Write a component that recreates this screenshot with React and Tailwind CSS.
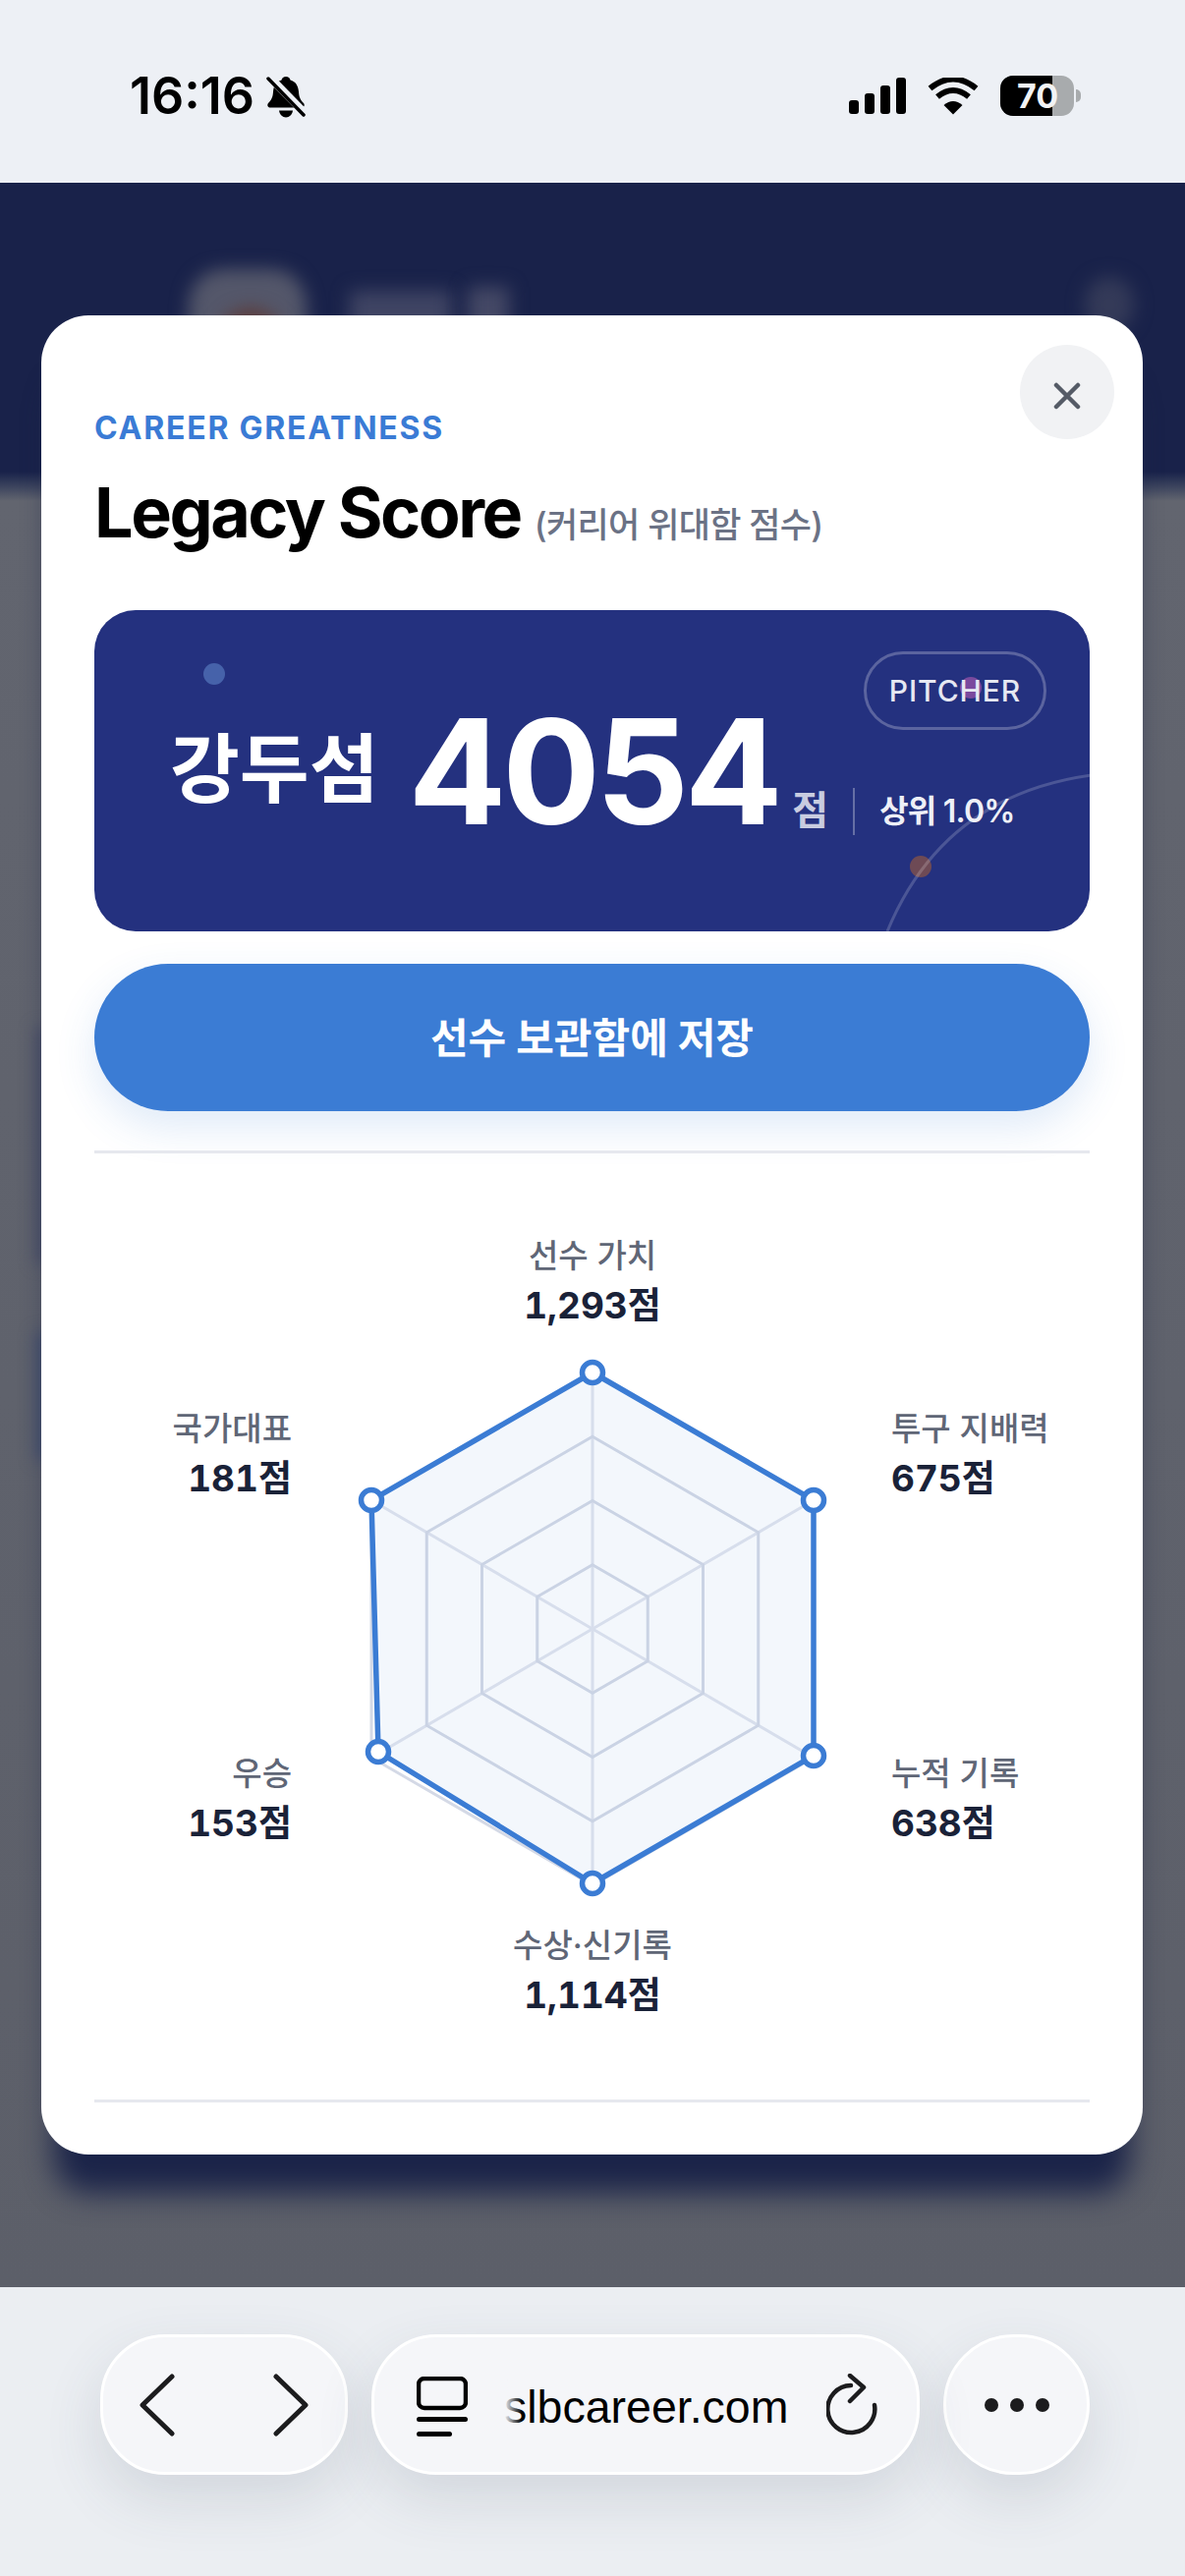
import React from "react";

const HEX = [
  [603, 1397],
  [828, 1527],
  [828, 1789],
  [603, 1919],
  [378, 1789],
  [378, 1527],
];
const RINGS = [0.25, 0.5, 0.75, 1];
const CX = 603;
const CY = 1658;

const DATA = [
  [603, 1397],
  [828, 1527],
  [828, 1787],
  [603, 1917],
  [385, 1783],
  [378, 1527],
];

const LABELS = [
  { x: 603, y: 1290, anchor: "middle", name: "선수 가치", value: "1,293점" },
  { x: 907, y: 1466, anchor: "start", name: "투구 지배력", value: "675점" },
  { x: 907, y: 1817, anchor: "start", name: "누적 기록", value: "638점" },
  { x: 603, y: 1992, anchor: "middle", name: "수상·신기록", value: "1,114점" },
  { x: 297, y: 1817, anchor: "end", name: "우승", value: "153점" },
  { x: 297, y: 1466, anchor: "end", name: "국가대표", value: "181점" },
];

const ringPoints = (k) =>
  HEX.map(([x, y]) => `${CX + (x - CX) * k},${CY + (y - CY) * k}`).join(" ");

const RadarChart = () => (
  <svg viewBox="96 1174 1014 963" className="block w-[1014px] h-[963px]">
    {HEX.map(([x, y]) => (
      <line key={x + "-" + y} x1={CX} y1={CY} x2={x} y2={y} stroke="#e2e5ef" strokeWidth="3" />
    ))}
    {RINGS.map((k) => (
      <polygon key={k} points={ringPoints(k)} fill="none" stroke="#d4d9e6" strokeWidth="3" />
    ))}
    <polygon
      points={DATA.map((p) => p.join(",")).join(" ")}
      fill="#3b7cd4"
      fillOpacity="0.06"
      stroke="#3b7cd4"
      strokeWidth="5.5"
    />
    {DATA.map(([x, y]) => (
      <circle key={x + "_" + y} cx={x} cy={y} r="10.5" fill="#fff" stroke="#3b7cd4" strokeWidth="5.5" />
    ))}
    {LABELS.map((l) => (
      <g key={l.name} textAnchor={l.anchor}>
        <text x={l.x} y={l.y} fontSize="33" fontWeight="500" fill="#5f6676">
          {l.name}
        </text>
        <text x={l.x} y={l.y + 52} fontSize="37" fontWeight="700" fill="#1a2238" className="tabular-nums">
          {l.value}
        </text>
      </g>
    ))}
  </svg>
);

const StatusBar = () => (
  <div className="h-[186px] bg-[#edf0f5] flex justify-between pl-[132px] pr-[106px] pt-[70px]">
    <div className="flex items-start gap-[12px]">
      <span className="text-[52px] leading-[56px] font-semibold text-black">16:16</span>
      <svg width="40" height="44" viewBox="0 0 40 44" className="mt-[7px]">
        <path d="M20 1c2.500 0 4 1.500 4.500 3.500 5.500 1.500 8 6 8.500 12 .3 5 1.500 8 5 11.500 1.500 2 .5 4.500-2 4.500H4c-2.500 0-3.500-2.500-2-4.500 3.500-3.500 4.700-6.500 5-11.500.5-6 3-10.500 8.500-12C16 2.500 17.500 1 20 1z" />
        <path d="M13 35.500h14c-.5 4-3.500 7-7 7s-6.500-3-7-7z" />
        <line x1="1" y1="-1" x2="39" y2="38" stroke="#edf0f5" strokeWidth="8" />
        <line x1="2" y1="3" x2="38" y2="40" stroke="#000" strokeWidth="3.500" strokeLinecap="round" />
      </svg>
    </div>
    <div className="flex items-start gap-[22px] pt-[9px]">
      <svg width="58" height="37" viewBox="0 0 58 37">
        <rect x="0" y="23" width="10" height="14" rx="3" />
        <rect x="16" y="16" width="10" height="21" rx="3" />
        <rect x="32" y="8" width="10" height="29" rx="3" />
        <rect x="48" y="0" width="10" height="37" rx="3" />
      </svg>
      <svg width="52" height="38" viewBox="0 0 52 38">
        <path d="M26 37.500 L16.500 28 Q26 20 35.500 28 Z" />
        <path d="M10 19.500 Q26 6.500 42 19.500" fill="none" stroke="#000" strokeWidth="6" />
        <path d="M2.500 11 Q26 -8 49.500 11" fill="none" stroke="#000" strokeWidth="6" />
      </svg>
      <div className="flex items-center gap-[2px] -mt-[2px]">
        <div className="relative w-[75px] h-[41px] rounded-[13px] bg-[#a8abad]">
          <div className="w-[53px] h-full bg-black rounded-l-[13px]" />
          <span className="absolute left-[17px] top-0 text-[34px] leading-[41px] font-bold text-[#f2f3f4]">70</span>
        </div>
        <div className="w-[5px] h-[13px] bg-[#a8abad] rounded-r-full" />
      </div>
    </div>
  </div>
);

const Backdrop = () => (
  <div className="absolute inset-0 flex flex-col bg-[#5c5f69]">
    <div className="relative h-[294px] bg-[#19224a] overflow-hidden">
      <div className="absolute left-[192px] top-[88px] w-[120px] h-[140px] rounded-[36px] bg-[#54576a] blur-[9px]" />
      <div className="absolute left-[222px] top-[128px] w-[66px] h-[100px] rounded-full bg-[#5d3c3a] blur-[9px]" />
      <div className="absolute left-[356px] top-[110px] w-[104px] h-[100px] bg-[#3f4463] blur-[9px]" />
      <div className="absolute left-[476px] top-[106px] w-[42px] h-[100px] bg-[#444865] blur-[9px]" />
      <div className="absolute left-[1104px] top-[96px] w-[50px] h-[56px] rounded-full bg-[#343a58] blur-[9px]" />
    </div>
    <div className="h-[30px] bg-gradient-to-b from-[#19224a] to-[#62656f]" />
    <div className="flex-1 bg-gradient-to-b from-[#62656f] to-[#5c5f69]" />
    <div className="absolute left-[36px] top-[860px] w-[24px] h-[240px] bg-[#4a5068] blur-[8px]" />
    <div className="absolute left-[36px] top-[1170px] w-[24px] h-[130px] bg-[#45506e] blur-[8px]" />
  </div>
);

const ScoreCard = () => (
  <div className="relative h-[327px] mt-[53px] rounded-[42px] bg-[#24317f] overflow-hidden">
    <div className="absolute left-[111px] top-[54px] w-[22px] h-[22px] rounded-full bg-[#4662aa]" />
    <div className="absolute left-[881px] top-[68px] w-[22px] h-[22px] rounded-full bg-[#7a4a9e]" />
    <div className="absolute left-[830px] top-[250px] w-[22px] h-[22px] rounded-full bg-[#6e4a55]" />
    <svg width="1014" height="327" viewBox="0 0 1014 327" className="absolute inset-0">
      <path d="M807 327 Q864 189 1014 168" fill="none" stroke="#ffffff" strokeOpacity="0.18" strokeWidth="3" />
    </svg>
    <div className="relative flex items-center h-[120px] pl-[77px] mt-[102px]">
      <span className="text-[77px] leading-[120px] font-bold text-white">강두섬</span>
      <div className="flex items-baseline ml-[30px] mt-[44px]">
        <span className="text-[148px] leading-[120px] font-bold text-white tracking-[-0.03em]">4054</span>
        <span className="ml-[14px] text-[40px] leading-[120px] font-bold text-[#c8cce0]">점</span>
      </div>
      <div className="flex items-center mt-[86px] ml-[25px]">
        <span className="w-[2px] h-[48px] bg-white/30" />
        <span className="ml-[25px] text-[32px] leading-[48px] font-semibold text-[#eef0f7] tracking-[-0.025em]">상위 1.0%</span>
      </div>
    </div>
    <div className="absolute right-[44px] top-[42px] w-[186px] h-[80px] rounded-full border-[3px] border-white/25 flex items-center justify-center text-[30px] font-medium tracking-[0.03em] text-[#e6e8f2]">
      PITCHER
    </div>
  </div>
);

const Modal = () => (
  <div className="absolute left-[42px] top-[135px] w-[1121px] h-[1872px] rounded-[48px] bg-white shadow-[0_52px_30px_-13px_#1b2449] px-[54px]">
    <button className="absolute right-[29px] top-[30px] w-[96px] h-[96px] rounded-full bg-[#f1f2f4] flex items-center justify-center">
      <svg width="28" height="28" viewBox="0 0 28 28" className="mt-[8px]">
        <path d="M3 3 L25 25 M25 3 L3 25" stroke="#555b66" strokeWidth="4.500" strokeLinecap="round" />
      </svg>
    </button>
    <div className="pt-[95px] text-[32px] leading-[40px] font-bold tracking-[0.055em] text-[#3a7bd5]">CAREER GREATNESS</div>
    <div className="flex items-baseline mt-[20px] h-[92px]">
      <span className="text-[70px] leading-[92px] font-bold tracking-[-0.035em] text-black">Legacy Score</span>
      <span className="ml-[14px] text-[35px] font-medium tracking-[-0.02em] text-[#6b7285]">(커리어 위대함 점수)</span>
    </div>
    <ScoreCard />
    <button className="block w-full h-[150px] mt-[33px] rounded-full bg-[#3b7cd4] shadow-[0_16px_40px_rgba(59,124,212,0.16)] text-[42px] font-bold text-white">
      선수 보관함에 저장
    </button>
    <div className="h-[3px] mt-[40px] bg-[#e6e8ee]" />
    <RadarChart />
    <div className="h-[3px] bg-[#e6e8ee]" />
  </div>
);

const BottomBar = () => (
  <div className="h-[294px] bg-[#ebeef2] flex gap-[24px] pl-[102px] pt-[48px]">
    <div className="w-[252px] h-[143px] rounded-[66px] bg-[#f5f6f9] border-[3px] border-white shadow-[0_24px_60px_rgba(60,70,90,0.14)] flex items-center justify-between px-[37px]">
      <svg width="36" height="64" viewBox="0 0 36 64">
        <path d="M33 3 L3 32 L33 61" fill="none" stroke="#1c1c1e" strokeWidth="5" strokeLinecap="round" strokeLinejoin="round" />
      </svg>
      <svg width="36" height="64" viewBox="0 0 36 64">
        <path d="M3 3 L33 32 L3 61" fill="none" stroke="#1c1c1e" strokeWidth="5" strokeLinecap="round" strokeLinejoin="round" />
      </svg>
    </div>
    <div className="relative w-[558px] h-[143px] rounded-[66px] bg-[#f5f6f9] border-[3px] border-white shadow-[0_24px_60px_rgba(60,70,90,0.14)] flex items-center pl-[43px]">
      <svg width="52" height="62" viewBox="0 0 52 62" className="shrink-0 mt-[4px]">
        <rect x="2" y="2" width="48" height="30" rx="6" fill="none" stroke="#000" strokeWidth="4.500" />
        <rect x="0" y="41" width="52" height="5" rx="2.500" />
        <rect x="0" y="56" width="36" height="5" rx="2.500" />
      </svg>
      <div className="relative ml-[37px] mt-[4px] text-[46.5px] leading-[60px] text-black font-['Liberation_Sans'] w-[290px] whitespace-nowrap">
        slbcareer.com
        <div className="absolute left-0 top-0 w-[18px] h-full bg-gradient-to-r from-[#f5f6f9] to-transparent" />
      </div>
      <svg width="52" height="64" viewBox="0 0 52 64" className="ml-[38px] shrink-0">
        <path d="M49 32 A24 24 0 1 1 25 12" fill="none" stroke="#1c1c1e" strokeWidth="4.500" strokeLinecap="round" />
        <path d="M24 2 L38 14 L24 28" fill="none" stroke="#1c1c1e" strokeWidth="4.500" strokeLinecap="round" strokeLinejoin="round" />
      </svg>
    </div>
    <div className="w-[149px] h-[143px] rounded-full bg-[#f5f6f9] border-[3px] border-white shadow-[0_24px_60px_rgba(60,70,90,0.14)] flex items-center justify-center gap-[12px]">
      <span className="w-[14px] h-[14px] rounded-full bg-[#1c1c1e]" />
      <span className="w-[14px] h-[14px] rounded-full bg-[#1c1c1e]" />
      <span className="w-[14px] h-[14px] rounded-full bg-[#1c1c1e]" />
    </div>
  </div>
);

export default function App() {
  return (
    <div className="w-[1206px] h-[2622px] flex flex-col overflow-hidden font-['Inter','Noto_Sans_CJK_KR',sans-serif]">
      <StatusBar />
      <div className="relative flex-1">
        <Backdrop />
        <Modal />
      </div>
      <BottomBar />
    </div>
  );
}
